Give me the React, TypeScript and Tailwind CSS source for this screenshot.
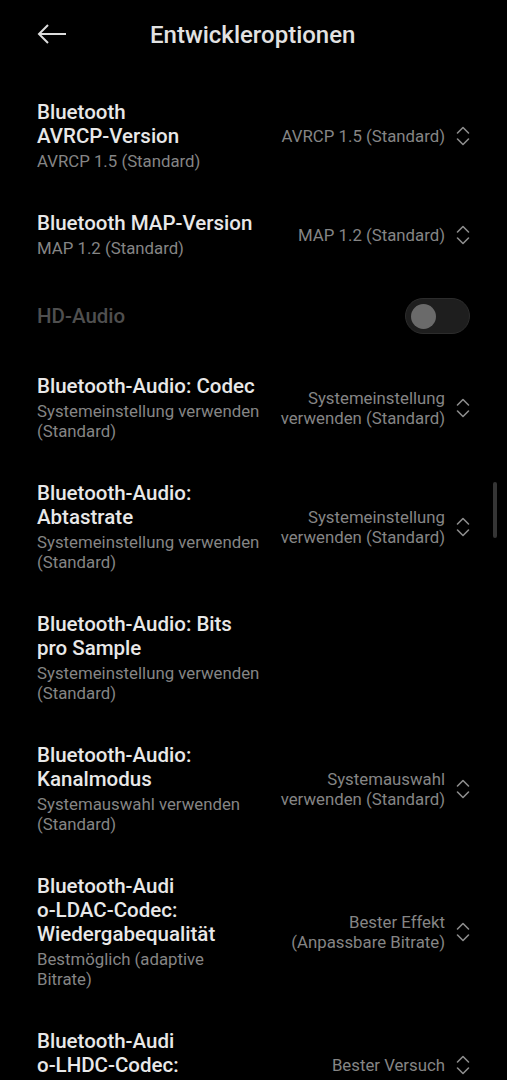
import React from "react";

type Item = {
  title: string[];
  sub?: string[];
  value?: string[];
  disabled?: boolean;
  toggle?: boolean;
};

const items: Item[] = [
  {
    title: ["Bluetooth", "AVRCP-Version"],
    sub: ["AVRCP 1.5 (Standard)"],
    value: ["AVRCP 1.5 (Standard)"],
  },
  {
    title: ["Bluetooth MAP-Version"],
    sub: ["MAP 1.2 (Standard)"],
    value: ["MAP 1.2 (Standard)"],
  },
  { title: ["HD-Audio"], disabled: true, toggle: true },
  {
    title: ["Bluetooth-Audio: Codec"],
    sub: ["Systemeinstellung verwenden", "(Standard)"],
    value: ["Systemeinstellung", "verwenden (Standard)"],
  },
  {
    title: ["Bluetooth-Audio:", "Abtastrate"],
    sub: ["Systemeinstellung verwenden", "(Standard)"],
    value: ["Systemeinstellung", "verwenden (Standard)"],
  },
  {
    title: ["Bluetooth-Audio: Bits", "pro Sample"],
    sub: ["Systemeinstellung verwenden", "(Standard)"],
  },
  {
    title: ["Bluetooth-Audio:", "Kanalmodus"],
    sub: ["Systemauswahl verwenden", "(Standard)"],
    value: ["Systemauswahl", "verwenden (Standard)"],
  },
  {
    title: ["Bluetooth-Audi", "o-LDAC-Codec:", "Wiedergabequalität"],
    sub: ["Bestmöglich (adaptive", "Bitrate)"],
    value: ["Bester Effekt", "(Anpassbare Bitrate)"],
  },
  {
    title: ["Bluetooth-Audi", "o-LHDC-Codec:", "Wiedergabequalität"],
    value: ["Bester Versuch"],
  },
];

function Chevrons() {
  return (
    <svg width="14" height="24" viewBox="0 0 14 24" fill="none" className="shrink-0">
      <polyline points="1.5,9 7,3.5 12.5,9" stroke="#8c8c8c" strokeWidth="1.6" strokeLinecap="round" strokeLinejoin="round" />
      <polyline points="1.5,15 7,20.5 12.5,15" stroke="#8c8c8c" strokeWidth="1.6" strokeLinecap="round" strokeLinejoin="round" />
    </svg>
  );
}

function Row({ item }: { item: Item }) {
  return (
    <div className="flex items-center justify-between py-5">
      <div className="w-[235px] shrink-0">
        <div
          className={`text-[20.5px] leading-[24px] font-medium ${
            item.disabled ? "text-[#4f4f4f]" : "text-[#e8e8e8]"
          }`}
        >
          {item.title.map((l, i) => (
            <div key={i} className="whitespace-nowrap">{l}</div>
          ))}
        </div>
        {item.sub && (
          <div className="mt-[3px] text-[16.8px] leading-[20px] text-[#858585]">
            {item.sub.map((l, i) => (
              <div key={i} className="whitespace-nowrap">{l}</div>
            ))}
          </div>
        )}
      </div>
      {item.value && (
        <div className="flex items-center gap-[11px]">
          <div className="text-right text-[16.8px] leading-[20px] text-[#858585]">
            {item.value.map((l, i) => (
              <div key={i} className="whitespace-nowrap">{l}</div>
            ))}
          </div>
          <Chevrons />
        </div>
      )}
      {item.toggle && (
        <div className="flex h-[36px] w-[65px] items-center rounded-full border border-[#2c2c2c] bg-[#1e1e1e] px-[5px]">
          <div className="h-[25px] w-[25px] rounded-full bg-[#6a6a6a]" />
        </div>
      )}
    </div>
  );
}

export default function App() {
  return (
    <div
      className="relative h-[1080px] w-[507px] overflow-hidden bg-black"
      style={{ fontFamily: "Roboto, 'Noto Sans', sans-serif" }}
    >
      <div className="flex h-[80px] items-start pt-[20px] pl-[37px]">
        <svg width="30" height="22" viewBox="0 0 30 22" fill="none" className="mt-[3px]">
          <line x1="2" y1="11" x2="29" y2="11" stroke="#dcdcdc" strokeWidth="2" />
          <polyline points="11,2 2,11 11,20" stroke="#dcdcdc" strokeWidth="2" fill="none" strokeLinejoin="miter" />
        </svg>
        <div className="ml-[83px] text-[24px] leading-[30px] font-medium text-[#e2e2e2]">
          Entwickleroptionen
        </div>
      </div>
      <div className="px-[37px]">
        {items.map((it, i) => (
          <Row key={i} item={it} />
        ))}
      </div>
      <div className="absolute left-[493px] top-[482px] h-[56px] w-[4px] rounded-full bg-[#353535]" />
    </div>
  );
}
